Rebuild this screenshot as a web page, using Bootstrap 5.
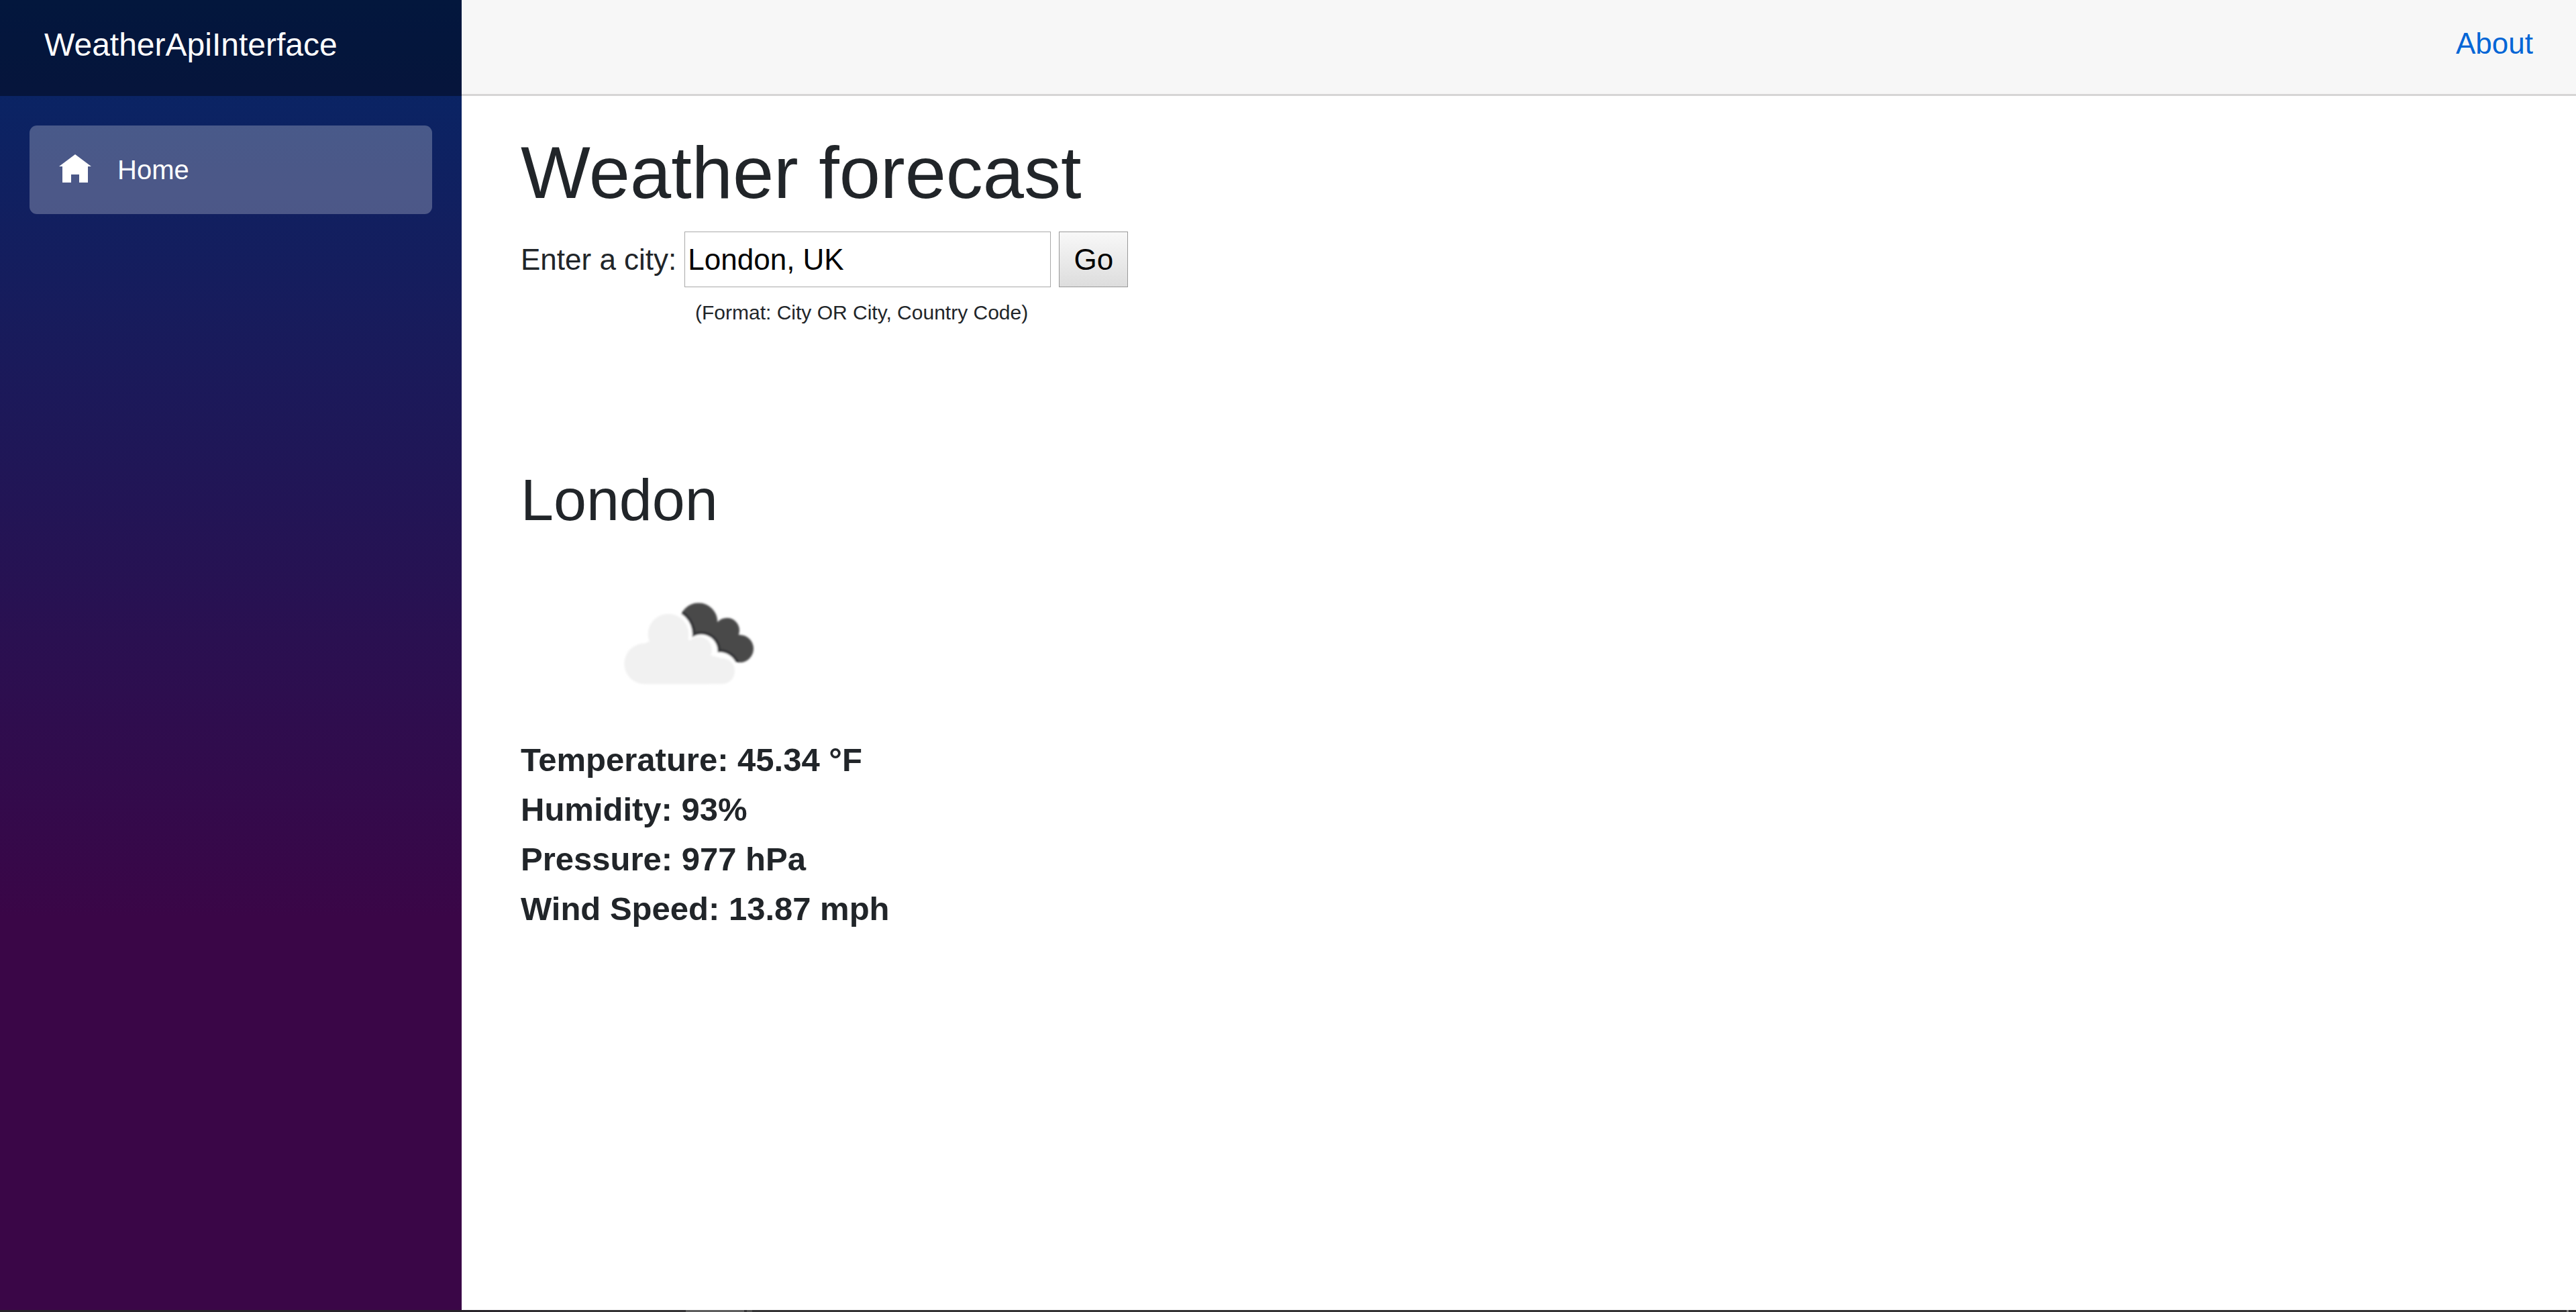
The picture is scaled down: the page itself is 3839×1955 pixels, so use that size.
<!DOCTYPE html>
<html lang="en">
<head>
<meta charset="utf-8">
<meta name="viewport" content="width=device-width, initial-scale=1">
<title>WeatherApiInterface</title>
<link href="https://cdn.jsdelivr.net/npm/bootstrap@5.3.0/dist/css/bootstrap.min.css" rel="stylesheet">
<style>
  body { font-family: "Liberation Sans", Arial, sans-serif; font-size: 44px; line-height: 66px; color: #212529; background: #fff; }
  .side-panel { width: 688px; background-image: linear-gradient(180deg, rgb(5, 39, 103) 0%, #3a0647 70%); }
  .brand-row { height: 143px; padding: 0 66px 10px; background: rgba(0, 0, 0, .4); }
  .brand-row a { font-size: 48px; }
  .side-nav { padding: 44px; }
  .side-nav .nav-link { height: 132px; padding: 0 44px; gap: 39px; font-size: 40px; color: #fff; border-radius: 11px; background: rgba(255, 255, 255, .25); }
  .side-nav svg { width: 48px; height: 42px; margin-bottom: 4px; }
  .head-row { height: 143px; padding: 0 64px 10px; background: #f7f7f7; border-bottom: 3px solid #d6d5d5; }
  .head-row a { color: #0366d6; }
  .page-body { padding: 48px 88px; }
  h1 { font-size: 110px; line-height: 132px; margin: 0 0 22px; }
  h2 { font-size: 88px; line-height: 106px; margin: 0; }
  .city-form { gap: 12px; }
  .city-box { width: 546px; height: 83px; padding: 4px; border: 1px solid #a9a9a9; color: #000; }
  .go-btn { width: 103px; height: 83px; padding: 0; border: 1px solid #999; color: #000; background: linear-gradient(#f8f8f8, #ddd); }
  .hint { font-size: 30px; line-height: 45px; padding: 15px 0 0 260px; }
  .report { padding-top: 204px; }
  .sky { width: 354px; height: 297px; }
  .readings { font-size: 49px; line-height: 74px; }
  .task-strip { height: 3px; gap: 4px; padding: 0 11px 0 1022px; background: linear-gradient(90deg, #272229 0, #272229 18%, #343335 22%); }
  .task-item { width: 87px; background: #5e5e5e; }
  .task-item-sm { width: 8px; background: #505050; }
  .task-end { width: 3px; background: #858585; }
</style>
<script src="https://cdn.jsdelivr.net/npm/bootstrap@5.3.0/dist/js/bootstrap.bundle.min.js"></script>
</head>
<body class="d-flex flex-column min-vh-100">
<div class="d-flex flex-grow-1">
  <aside class="side-panel flex-shrink-0">
    <div class="brand-row d-flex align-items-center"><a class="text-white text-decoration-none" href="#">WeatherApiInterface</a></div>
    <nav class="side-nav nav flex-column">
      <a class="nav-link d-flex align-items-center" href="#" aria-current="page">
        <svg viewBox="0 0 48 42" fill="#fff" aria-hidden="true"><path d="M24 0 48 18H43V42H30V30H18V42H5V18H0Z"/></svg>
        Home
      </a>
    </nav>
  </aside>
  <div class="flex-grow-1">
    <header class="head-row d-flex align-items-center justify-content-end"><a class="text-decoration-none" href="#">About</a></header>
    <main class="page-body">
      <h1 class="fw-normal">Weather forecast</h1>
      <form class="city-form d-flex align-items-center">
        <label for="city">Enter a city:</label>
        <input class="city-box" id="city" type="text" value="London, UK">
        <button class="go-btn" type="button">Go</button>
      </form>
      <div class="hint">(Format: City OR City, Country Code)</div>
      <section class="report">
        <h2 class="fw-normal">London</h2>
        <svg class="sky d-block" viewBox="0 0 354 297" role="img" aria-label="Broken clouds">
          <defs>
            <filter id="soft"><feGaussianBlur stdDeviation="4"/></filter>
            <clipPath id="rear">
              <circle cx="393" cy="140" r="85"/>
              <circle cx="520" cy="178" r="56"/>
              <circle cx="577" cy="260" r="62"/>
              <path d="M392 140 520 178 578 260 555 318 470 285 390 215Z"/>
            </clipPath>
          </defs>
          <g transform="translate(134 82) scale(.33333)" filter="url(#soft)">
            <!-- dark cloud behind, shaded along the edge next to the front cloud -->
            <g clip-path="url(#rear)">
              <path fill="#48484a" d="M290 40H660V340H290Z"/>
              <g fill="#343638">
                <circle cx="258" cy="195" r="122"/>
                <circle cx="405" cy="270" r="88"/>
                <circle cx="487" cy="355" r="94"/>
              </g>
            </g>
            <g fill="#fff">
              <circle cx="258" cy="195" r="108"/>
              <circle cx="405" cy="270" r="74"/>
              <circle cx="487" cy="355" r="80"/>
            </g>
            <g fill="#f1f1f1">
              <circle cx="258" cy="195" r="91"/>
              <circle cx="152" cy="327" r="91"/>
              <circle cx="395" cy="265" r="58"/>
              <circle cx="497" cy="360" r="58"/>
              <path d="M152 418V236L258 195 345 215 395 265 450 290 497 303V418Z"/>
            </g>
          </g>
        </svg>
        <div class="readings fw-bold">
          <div>Temperature: 45.34 °F</div>
          <div>Humidity: 93%</div>
          <div>Pressure: 977 hPa</div>
          <div>Wind Speed: 13.87 mph</div>
        </div>
      </section>
    </main>
  </div>
</div>
<footer class="task-strip d-flex"><span class="task-item"></span><span class="task-item-sm"></span><span class="task-end ms-auto"></span></footer>
</body>
</html>
